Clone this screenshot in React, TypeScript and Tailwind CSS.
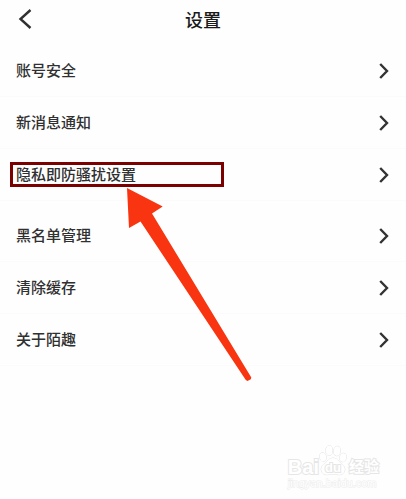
import React from 'react';

const groups = [
  ['账号安全', '新消息通知', '隐私即防骚扰设置'],
  ['黑名单管理', '清除缓存', '关于陌趣'],
];

const highlighted = '隐私即防骚扰设置';

function BackIcon() {
  return (
    <svg width="14" height="20" viewBox="0 0 14 20" fill="none" stroke="#303030" strokeWidth="2.4">
      <path d="M12.5 1 L2.5 10 L12.5 19" />
    </svg>
  );
}

function ArrowIcon() {
  return (
    <svg width="10" height="16" viewBox="0 0 10 16" fill="none" stroke="#333" strokeWidth="2.4">
      <path d="M1.2 1 L8 8 L1.2 15" />
    </svg>
  );
}

function Row({ label }: { label: string }) {
  return (
    <li className="relative border-b border-[#fbfbfb]">
      <button type="button" className="flex h-[51px] w-full items-center justify-between pl-4 pr-[17px] text-[15px] font-medium text-[#303030]">
        <span>{label}</span>
        <ArrowIcon />
      </button>
      {label === highlighted && (
        <div className="pointer-events-none absolute left-[10px] top-[13px] h-[25px] w-[214px] border-3 border-[#7b0000]" />
      )}
    </li>
  );
}

// big red pointer laid over the list
function Pointer() {
  return (
    <svg className="pointer-events-none absolute left-[126px] top-[187px]" width="127" height="196" viewBox="0 0 127 196">
      <path d="M1 1 L36.7 19.5 L26 26.5 L125.3 190.5 L124.8 192.3 L121.5 194 L119.8 193 L14.5 34.5 L3 41 Z" fill="#f83510" />
    </svg>
  );
}

function Paw() {
  return (
    <svg className="absolute inset-0" width="28" height="31" viewBox="0 0 28 31" fill="#fff" stroke="#e2e2e2" strokeWidth="1">
      <ellipse cx="4" cy="12" rx="3.2" ry="4.3" transform="rotate(-12 4 12)" />
      <ellipse cx="10.2" cy="5.5" rx="3.3" ry="4.7" />
      <ellipse cx="18" cy="6" rx="3.3" ry="4.7" transform="rotate(8 18 6)" />
      <ellipse cx="24" cy="12.5" rx="3.2" ry="4.3" transform="rotate(12 24 12.5)" />
      <path d="M14 13 C10 13 9 16 6 18.5 C3 21 1.5 23 2.5 26 C3.5 29.5 7 30 10 29.5 C13 29 15 29 18 29.5 C21 30 24.5 29.5 25.5 26 C26.5 23 25 21 22 18.5 C19 16 18 13 14 13 Z" />
    </svg>
  );
}

function Watermark() {
  return (
    <footer className="mb-[9px] mr-[27px] mt-auto self-end font-['Liberation_Sans','Noto_Sans_CJK_SC',sans-serif] font-bold text-white [-webkit-text-stroke:2px_#e6e6e6] [paint-order:stroke_fill]">
      <div className="flex h-[31px] items-end">
        <span className="text-[20px] leading-[18px]">Bai</span>
        <span className="relative h-[31px] w-7">
          <Paw />
          <span className="absolute inset-x-0 bottom-[2px] text-center text-[13px] leading-[13px]">du</span>
        </span>
        <span className="pl-[2px] text-[15px] leading-[18px]">经验</span>
      </div>
      <div className="text-[11px] font-normal leading-[14px] [-webkit-text-stroke:1px_#ececec]">jingyan.baidu.com</div>
    </footer>
  );
}

export default function App() {
  return (
    <div className="relative flex min-h-screen flex-col bg-[#fefefe] font-['Noto_Sans_CJK_SC',sans-serif]">
      <header className="grid h-[38px] grid-cols-3 items-center">
        <button type="button" aria-label="返回" className="justify-self-start pl-[18px]">
          <BackIcon />
        </button>
        <h1 className="text-center text-[18px] font-medium text-[#1a1a1a]">设置</h1>
      </header>

      <main className="mt-[7px] flex flex-col gap-[9px]">
        {groups.map((items) => (
          <ul key={items[0]}>
            {items.map((label) => (
              <Row key={label} label={label} />
            ))}
          </ul>
        ))}
      </main>

      <Pointer />
      <Watermark />
    </div>
  );
}
